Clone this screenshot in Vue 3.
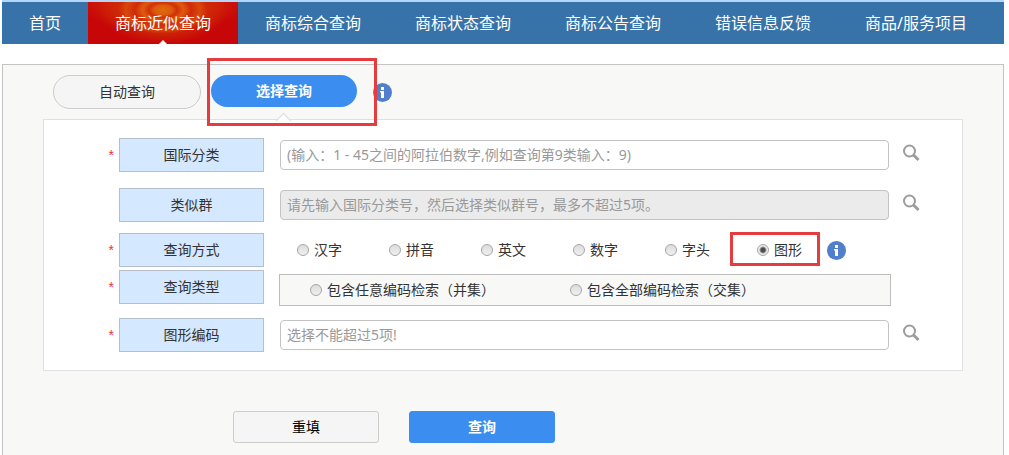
<script setup>
import { ref } from 'vue'

const navItems = ['首页', '商标近似查询', '商标综合查询', '商标状态查询', '商标公告查询', '错误信息反馈', '商品/服务项目']
const activeNav = ref(1)

const methods = ['汉字', '拼音', '英文', '数字', '字头', '图形']
const method = ref('图形')

const types = ['包含任意编码检索（并集）', '包含全部编码检索（交集）']
const type = ref('')

const intClass = ref('')
const similarGroup = ref('')
const figureCode = ref('')
</script>

<template>
  <div class="page">
    <nav class="nav">
      <a
        v-for="(item, i) in navItems"
        :key="item"
        href="#"
        class="nav-item"
        :class="{ active: i === activeNav }"
        @click.prevent="activeNav = i"
      >{{ item }}</a>
    </nav>

    <form class="panel" @submit.prevent>
      <div class="tabs">
        <button type="button" class="tab">自动查询</button>
        <div class="tab-wrap">
          <button type="button" class="tab selected">选择查询</button>
          <span class="mark mark-tab"></span>
        </div>
        <svg class="info" viewBox="0 0 19 19" aria-hidden="true">
          <circle cx="9.5" cy="9.5" r="9.5" fill="#527fcb" />
          <rect x="8" y="4" width="3" height="3" fill="#fff" />
          <path d="M7 8h4v7H8V9.500H7z" fill="#fff" />
        </svg>
      </div>

      <div class="card">
        <div class="row">
          <span class="star">*</span>
          <label class="label" for="int-class">国际分类</label>
          <input id="int-class" v-model="intClass" class="text" type="text" placeholder="(输入：1 - 45之间的阿拉伯数字,例如查询第9类输入：9)" />
          <button type="button" class="search" aria-label="选择国际分类">
            <svg viewBox="0 0 18 18"><circle cx="7.500" cy="7" r="5.500" /><path d="M11.500 11l5 5" /></svg>
          </button>
        </div>

        <div class="row">
          <span class="star"></span>
          <label class="label" for="similar-group">类似群</label>
          <input id="similar-group" v-model="similarGroup" class="text" type="text" disabled placeholder="请先输入国际分类号，然后选择类似群号，最多不超过5项。" />
          <button type="button" class="search" aria-label="选择类似群">
            <svg viewBox="0 0 18 18"><circle cx="7.500" cy="7" r="5.500" /><path d="M11.500 11l5 5" /></svg>
          </button>
        </div>

        <div class="row row-method">
          <span class="star">*</span>
          <span id="method-label" class="label">查询方式</span>
          <div class="methods" role="radiogroup" aria-labelledby="method-label">
            <label v-for="m in methods" :key="m" class="option">
              <input v-model="method" type="radio" name="method" :value="m" />{{ m }}
              <span v-if="m === '图形'" class="mark mark-option"></span>
            </label>
            <svg class="info" viewBox="0 0 19 19" aria-hidden="true">
              <circle cx="9.5" cy="9.5" r="9.5" fill="#527fcb" />
              <rect x="8" y="4" width="3" height="3" fill="#fff" />
              <path d="M7 8h4v7H8V9.500H7z" fill="#fff" />
            </svg>
          </div>
        </div>

        <div class="row row-type">
          <span class="star">*</span>
          <span id="type-label" class="label">查询类型</span>
          <div class="types" role="radiogroup" aria-labelledby="type-label">
            <label v-for="t in types" :key="t" class="option">
              <input v-model="type" type="radio" name="type" :value="t" />{{ t }}
            </label>
          </div>
        </div>

        <div class="row row-code">
          <span class="star">*</span>
          <label class="label" for="figure-code">图形编码</label>
          <input id="figure-code" v-model="figureCode" class="text" type="text" placeholder="选择不能超过5项!" />
          <button type="button" class="search" aria-label="选择图形编码">
            <svg viewBox="0 0 18 18"><circle cx="7.500" cy="7" r="5.500" /><path d="M11.500 11l5 5" /></svg>
          </button>
        </div>
      </div>

      <div class="actions">
        <button type="reset" class="btn">重填</button>
        <button type="submit" class="btn primary">查询</button>
      </div>
    </form>
  </div>
</template>

<style>
body {
  background: #fff;
}
</style>

<style scoped>
.page,
.page * {
  box-sizing: border-box;
}
.page {
  padding: 0 5px 0 2px;
  color: #333;
  font-family: "Noto Sans", "Noto Sans CJK SC", sans-serif;
  font-size: 14px;
  line-height: 20px;
}
button,
input {
  margin: 0;
  font: inherit;
  color: inherit;
}
button {
  cursor: pointer;
}

.nav {
  display: flex;
  border-top: 2px solid #b5d6fb;
  background: #3773a9;
}
.nav-item {
  position: relative;
  padding: 0 27px;
  color: #fff;
  font-size: 16px;
  line-height: 42px;
  white-space: nowrap;
  text-decoration: none;
}
.nav-item.active {
  background:
    radial-gradient(ellipse 64px 34px at 50% 8px, #e06a10 0, #dd5a0c 14%, #d03008 22%, #df5a0e 32%, #cf2a08 44%, #d8480c 58%, rgba(206, 40, 8, 0.8) 70%, rgba(200, 6, 6, 0) 100%),
    radial-gradient(ellipse 85px 30px at 50% 0, #d83c08 0, #d02805 50%, rgba(199, 6, 8, 0) 100%),
    #c70608;
}
.nav-item.active::after {
  content: "";
  position: absolute;
  bottom: 0;
  left: 50%;
  margin-left: -4px;
  border: 4px solid transparent;
  border-top: 0;
  border-bottom-color: #fff;
}

.panel {
  margin-top: 20px;
  padding: 10px 40px 12px;
  border: 1px solid #c4c4c4;
  border-bottom: 0;
  background: #f8f8f6;
}
.tabs {
  display: flex;
  align-items: flex-start;
  gap: 10px;
  height: 44px;
  padding-left: 10px;
}
.tab {
  display: block;
  width: 148px;
  height: 34px;
  padding: 0;
  border: 1px solid #ccc;
  border-radius: 17px;
  background: #f5f5f5;
}
.tab-wrap {
  position: relative;
}
.tab.selected {
  width: 146px;
  height: 32px;
  border: 0;
  background: #3b8eef;
  color: #fff;
  font-weight: bold;
}
.tab-wrap::after {
  content: "";
  position: absolute;
  top: 40px;
  left: 67px;
  width: 10px;
  height: 10px;
  border: solid #ddd;
  border-width: 1px 0 0 1px;
  background: linear-gradient(135deg, #fff 50%, transparent 50%);
  transform: rotate(45deg);
}
.info {
  display: block;
  flex: none;
  width: 19px;
  height: 19px;
}
.tabs .info {
  margin: 8px 0 0 6px;
}
.mark {
  position: absolute;
  z-index: 1;
  border: 3px solid #e43c3f;
  pointer-events: none;
}
.mark-tab {
  top: -17px;
  left: -4px;
  width: 170px;
  height: 68px;
}
.mark-option {
  top: -8px;
  left: -27px;
  width: 90px;
  height: 34px;
}

.card {
  display: flex;
  flex-direction: column;
  gap: 16px;
  padding: 18px 42px 18px 0;
  border: 1px solid #e0e0e0;
  background: #fff;
}
.row {
  display: grid;
  grid-template-columns: 75px 145px minmax(0, 1fr) 18px;
  align-items: center;
}
.row-method {
  margin-top: -5px;
}
.row-type {
  align-items: start;
  margin-top: -13px;
}
.row-code {
  margin-top: -4px;
}
.star {
  padding-right: 5px;
  color: #f03030;
  font-family: "Liberation Sans", sans-serif;
  text-align: right;
}
.row-type .star {
  padding-top: 7px;
}
.label {
  height: 34px;
  border: 1px solid #b4bfca;
  background: #d4e8ff;
  line-height: 32px;
  text-align: center;
}
.text {
  width: auto;
  min-width: 0;
  height: 30px;
  margin: 0 13px 0 16px;
  padding: 0 6px 2px;
  border: 1px solid #c3c3c3;
  border-radius: 4px;
  background: #fff;
}
.text:disabled {
  background: #ebebeb;
}
.text::placeholder {
  color: #999;
  opacity: 1;
}
.search {
  width: 18px;
  height: 22px;
  padding: 0 0 4px;
  border: 0;
  background: none;
}
.search svg {
  display: block;
  width: 18px;
  height: 18px;
  fill: none;
  stroke: #9c9c9c;
  stroke-width: 2;
}
.search path {
  stroke-width: 3;
}

.methods {
  display: flex;
  grid-column: 3 / -1;
  align-items: center;
  padding-left: 33px;
}
.option {
  position: relative;
  display: flex;
  align-items: center;
  gap: 5px;
  white-space: nowrap;
}
.methods .option {
  width: 92px;
}
.methods .option:nth-of-type(6) {
  width: 70px;
}
.option input {
  flex: none;
  width: 12px;
  height: 12px;
  border: 1px solid #a6a6a6;
  border-radius: 50%;
  background: linear-gradient(#dcdcdc, #f0f0f0);
  appearance: none;
}
.option input:checked {
  background: radial-gradient(circle, #4c4c4c 0 2px, #eee 4px);
}
.types {
  display: flex;
  height: 32px;
  margin: 4px 11px 0 15px;
  padding-left: 30px;
  border: 1px solid #bdbdbd;
  background: #f8f8f6;
}
.types .option {
  width: 260px;
}

.actions {
  display: flex;
  gap: 30px;
  padding: 40px 0 0 190px;
}
.btn {
  width: 146px;
  height: 32px;
  padding: 0;
  border: 1px solid #ccc;
  border-radius: 3px;
  background: #f5f5f5;
  color: #000;
}
.btn.primary {
  border-color: #3b8eef;
  background: #3b8eef;
  color: #fff;
  font-weight: bold;
}
</style>
